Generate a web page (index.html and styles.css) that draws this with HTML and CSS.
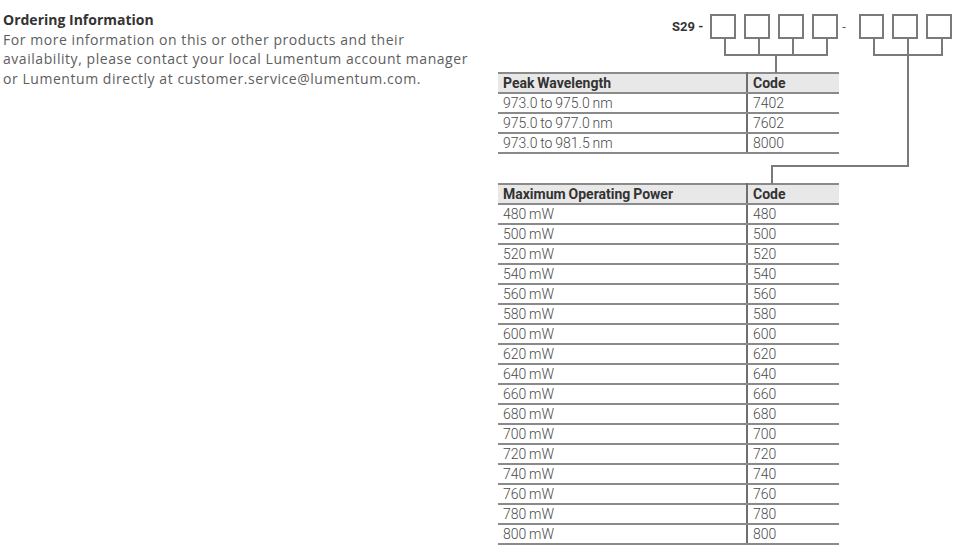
FILE: index.html
```html
<!DOCTYPE html>
<html>
<head>
<meta charset="utf-8">
<link rel="stylesheet" href="styles.css">
</head>
<body>
<div class="page">
  <div class="intro">
    <div class="intro-title">Ordering Information</div>
    <p class="intro-text">For more information on this or other products and their availability, please contact your local Lumentum account manager or Lumentum directly at customer.service@lumentum.com.</p>
  </div>
  <div class="order">
    <svg class="wires" width="462" height="190" viewBox="0 0 462 190">
      <g fill="none" stroke="#7a7a7a" stroke-width="2" shape-rendering="crispEdges">
        <path d="M227 39 V55 M261 39 V55 M295 39 V55 M329 39 V55 M226 55 H330 M278 55 V73"/>
        <path d="M376 39 V55 M410 39 V55 M444 39 V55 M375 55 H445 M410 55 V166 H274 V184"/>
      </g>
    </svg>
    <div class="part">
      <span class="part-label">S29 -</span>
      <span class="box"></span><span class="box"></span><span class="box"></span><span class="box"></span>
      <span class="part-dash">-</span>
      <span class="box"></span><span class="box"></span><span class="box"></span>
    </div>
    <table class="spec spec-first">
      <thead><tr><th>Peak Wavelength</th><th>Code</th></tr></thead>
      <tbody>
        <tr><td>973.0 to 975.0 nm</td><td>7402</td></tr>
        <tr><td>975.0 to 977.0 nm</td><td>7602</td></tr>
        <tr><td>973.0 to 981.5 nm</td><td>8000</td></tr>
      </tbody>
    </table>
    <table class="spec spec-second">
      <thead><tr><th>Maximum Operating Power</th><th>Code</th></tr></thead>
      <tbody>
        <tr><td>480 mW</td><td>480</td></tr>
        <tr><td>500 mW</td><td>500</td></tr>
        <tr><td>520 mW</td><td>520</td></tr>
        <tr><td>540 mW</td><td>540</td></tr>
        <tr><td>560 mW</td><td>560</td></tr>
        <tr><td>580 mW</td><td>580</td></tr>
        <tr><td>600 mW</td><td>600</td></tr>
        <tr><td>620 mW</td><td>620</td></tr>
        <tr><td>640 mW</td><td>640</td></tr>
        <tr><td>660 mW</td><td>660</td></tr>
        <tr><td>680 mW</td><td>680</td></tr>
        <tr><td>700 mW</td><td>700</td></tr>
        <tr><td>720 mW</td><td>720</td></tr>
        <tr><td>740 mW</td><td>740</td></tr>
        <tr><td>760 mW</td><td>760</td></tr>
        <tr><td>780 mW</td><td>780</td></tr>
        <tr><td>800 mW</td><td>800</td></tr>
      </tbody>
    </table>
  </div>
</div>
</body>
</html>
```
FILE: styles.css
```css
html, body {
  margin: 0;
  padding: 0;
  background: #ffffff;
}
.page {
  display: flex;
  width: 960px;
  height: 555px;
  overflow: hidden;
}
.intro {
  width: 495px;
  padding: 10px 0 0 3px;
  font-family: "Open Sans", sans-serif;
}
.intro-title {
  font-size: 14px;
  font-weight: 700;
  color: #333333;
  line-height: 19.5px;
}
.intro-text {
  margin: 0;
  max-width: 475px;
  font-size: 14px;
  letter-spacing: 0.55px;
  line-height: 19.5px;
  color: #5e5e5e;
}
.order {
  position: relative;
  width: 462px;
  font-family: Roboto, sans-serif;
}
.wires {
  position: absolute;
  left: 0;
  top: 0;
  pointer-events: none;
}
.part {
  display: flex;
  align-items: center;
  margin-top: 14px;
  height: 25px;
}
.part-label {
  width: 207px;
  margin-right: 7px;
  text-align: right;
  font-size: 13px;
  font-weight: 700;
  color: #333333;
}
.box {
  box-sizing: border-box;
  width: 26px;
  height: 25px;
  border: 2px solid #7a7a7a;
  margin-right: 8px;
}
.part-dash {
  width: 13px;
  margin-left: -8px;
  margin-right: 8px;
  text-align: center;
  font-size: 13px;
  color: #555555;
}
.spec {
  width: 341px;
  border-collapse: collapse;
  font-size: 14px;
  word-spacing: -0.6px;
  color: #595959;
}
.spec-first {
  margin-top: 33px;
}
.spec-second {
  margin-top: 29px;
}
.spec th, .spec td {
  padding: 0 0 0 5px;
  height: 18px;
  line-height: 18px;
  text-align: left;
  border-bottom: 2px solid #8a8a8a;
  white-space: nowrap;
}
.spec th {
  background: #e8e8e8;
  color: #333333;
  font-weight: 700;
  border-top: 2px solid #8a8a8a;
}
.spec td {
  font-weight: 300;
  color: #4a4a4a;
}
.spec th:first-child, .spec td:first-child {
  width: 243px;
  border-right: 2px solid #6f6f6f;
}
```
